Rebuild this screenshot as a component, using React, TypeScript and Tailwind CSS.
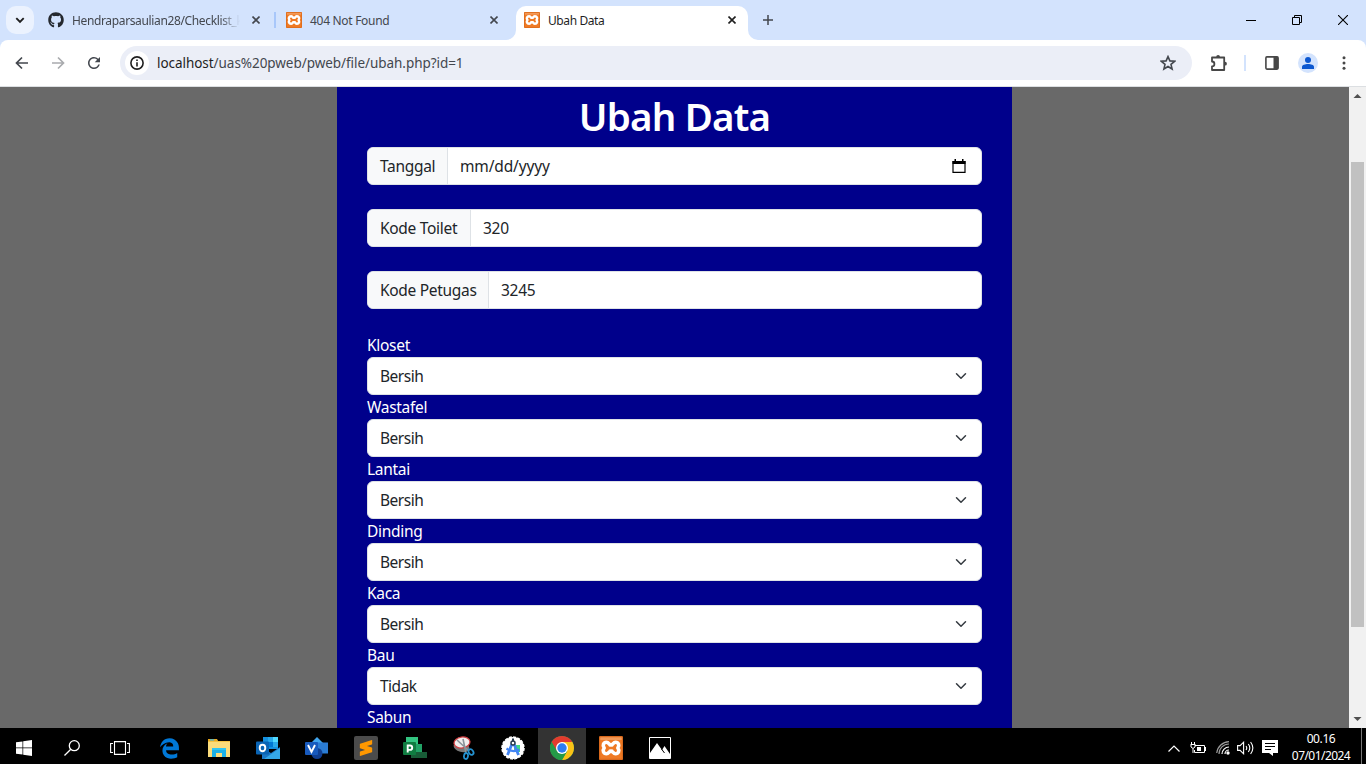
import React from "react";
import { FaEdgeLegacy, FaGithub } from "react-icons/fa";
import { SiSublimetext } from "react-icons/si";
import { MdRefresh } from "react-icons/md";

const CloseGlyph = ({ dark = false }: { dark?: boolean }) => (
  <svg width="8" height="8" viewBox="0 0 8 8" className="shrink-0">
    <path d="M.5.5l7 7M7.5.5l-7 7" stroke={dark ? "#1f1f1f" : "#43474e"} strokeWidth="1.6" />
  </svg>
);

const Xampp = ({ size }: { size: number }) => (
  <svg width={size} height={size} viewBox="0 0 24 24" className="shrink-0">
    <rect width="24" height="24" rx="1.5" fill="#ef7a24" />
    <path d="M1 1h22v3H1z" fill="#f39a58" />
    <rect x=".6" y=".6" width="22.8" height="22.8" rx="1.2" fill="none" stroke="#d9691c" strokeWidth="1.2" />
    <path d="M7.500 6.300c-3 0-4.300 3-2.300 5.700-2 2.700-.7 5.700 2.300 5.700 2.500 0 2.200-2.500 4.500-2.500s2 2.500 4.500 2.500c3 0 4.300-3 2.300-5.700 2-2.700.7-5.700-2.300-5.700-2.500 0-2.200 2.500-4.500 2.500s-2-2.500-4.500-2.500z" fill="none" stroke="#fff" strokeWidth="3.600" strokeLinejoin="round" />
    <path d="M9.800 8.500h4.400v2H9.800zM9.800 13.500h4.400v2H9.800z" fill="#fff" />
  </svg>
);

function TabStrip() {
  return (
    <div className="flex h-10 shrink-0 items-start bg-[#d3e3fd] text-[12px]">
      <div className="ml-1.5 mt-1.5 flex h-7 w-7 items-center justify-center rounded-[10px] bg-[#ebf2fe]">
        <svg width="10" height="7" viewBox="0 0 10 7"><path d="M1.300 1.200L5 4.900l3.700-3.700" fill="none" stroke="#1f1f1f" strokeWidth="1.900" /></svg>
      </div>
      <div className="ml-3.5 flex h-10 w-[226px] items-center">
        <FaGithub size={16} className="shrink-0 text-[#24292f]" />
        <span className="ml-2 w-[168px] whitespace-nowrap pt-px text-[#43474e] tracking-[-0.36px] [mask-image:linear-gradient(to_right,black_88%,transparent)]">Hendraparsaulian28/Checklist_k</span>
        <span className="ml-3"><CloseGlyph /></span>
      </div>
      <div className="mt-3 h-4 w-0.5 bg-[#a8c7fa]" />
      <div className="ml-2.5 flex h-10 w-[230px] items-center">
        <Xampp size={16} />
        <span className="ml-2 w-[180px] pt-px tracking-[-0.3px] text-[#43474e]">404 Not Found</span>
        <CloseGlyph />
      </div>
      <div className="relative mt-1.5 flex h-[34px] w-[232px] items-center rounded-t-[10px] bg-white pb-1.5 pl-2">
        <svg width="10" height="10" className="absolute bottom-0 -left-2.5"><path d="M10 0v10H0A10 10 0 0 0 10 0z" fill="#fff" /></svg>
        <svg width="10" height="10" className="absolute bottom-0 -right-2.5"><path d="M0 0v10h10A10 10 0 0 1 0 0z" fill="#fff" /></svg>
        <Xampp size={16} />
        <span className="ml-2 w-[180px] pt-px tracking-[-0.4px] text-[#1f1f1f]">Ubah Data</span>
        <CloseGlyph dark />
      </div>
      <svg width="10" height="10" viewBox="0 0 10 10" className="ml-[15px] mt-[15px]"><path d="M5 0v10M0 5h10" stroke="#43474e" strokeWidth="1.500" /></svg>
      <div className="ml-auto mr-[18px] flex h-10 items-center gap-9">
        <svg width="10" height="10"><path d="M0 5.500h10" stroke="#000" /></svg>
        <svg width="10" height="10" fill="none" stroke="#000"><path d="M.5 2.500h7v7h-7zM2.500 2.500v-2h7v7h-2" /></svg>
        <svg width="10" height="10"><path d="M0 0l10 10M10 0L0 10" stroke="#000" strokeWidth="1.100" /></svg>
      </div>
    </div>
  );
}

function Toolbar() {
  return (
    <div className="shrink-0 bg-[#d3e3fd]">
      <div className="flex h-[47px] items-center rounded-t-[8px] border-b border-[#dcdfe2] bg-white">
        <svg width="14" height="14" viewBox="0 0 14 14" className="ml-[15px]" fill="none" stroke="#43474e" strokeWidth="1.700"><path d="M13 7H2M7 1.500L1.500 7 7 12.500" /></svg>
        <svg width="14" height="14" viewBox="0 0 14 14" className="ml-[22px]" fill="none" stroke="#a9abae" strokeWidth="1.700"><path d="M1 7h11M7 1.500L12.500 7 7 12.500" /></svg>
        <MdRefresh size={18} className="ml-5 text-[#43474e]" />
        <div className="ml-[17px] flex h-[34px] w-[1072px] items-center rounded-full bg-[#ebeef7] pl-[5px] pr-[16px]">
          <span className="grid h-6 w-6 place-items-center rounded-full bg-white">
            <svg width="14" height="14" viewBox="0 0 14 14"><circle cx="7" cy="7" r="6.100" fill="none" stroke="#1f1f1f" strokeWidth="1.600" /><path d="M6.200 6.200h1.600v4.300H6.200zM6.200 3.500h1.600v1.600H6.200z" fill="#1f1f1f" /></svg>
          </span>
          <span className="ml-2 whitespace-nowrap pt-px text-[13.500px] tracking-[-0.05px] text-[#43474e]"><span className="text-[#1f1f1f]">localhost</span>/uas%20pweb/pweb/file/ubah.php?id=1</span>
          <svg width="16" height="16" viewBox="0 0 16 16" className="ml-auto"><path d="M8 1.600l1.900 4.300 4.700.4-3.600 3.100 1.100 4.600L8 11.500 3.900 14 5 9.400 1.400 6.300l4.700-.4z" fill="none" stroke="#43474e" strokeWidth="1.600" /></svg>
        </div>
        <svg width="18" height="18" viewBox="0 0 18 18" className="ml-[18px]" fill="none" stroke="#474747" strokeWidth="1.800" strokeLinejoin="round">
          <path d="M2 3.500h12.200v12.500H2v-3.700a2.400 2.400 0 0 0 0-4.800z" />
          <path d="M6.200 3a1.900 1.900 0 0 1 3.800 0zM15 7.800a1.900 1.900 0 0 1 0 3.800z" fill="#474747" stroke="none" />
        </svg>
        <div className="ml-[16px] h-4 w-0.5 bg-[#d3e3fd]" />
        <svg width="14" height="14" viewBox="0 0 14 14" className="ml-[19px]"><rect x=".9" y=".9" width="12.200" height="12.200" rx="1" fill="none" stroke="#474747" strokeWidth="1.600" /><path d="M8.500 1h4.500v12H8.500z" fill="#474747" /></svg>
        <span className="ml-[19px] grid h-5 w-5 place-items-center rounded-full bg-[#d3e3fd]">
          <svg width="12" height="12" viewBox="0 0 12 12" fill="#0b57d0"><circle cx="6" cy="3" r="3" /><path d="M0 12V9.800C0 7.900 3.200 7 6 7s6 .9 6 2.800V12z" /></svg>
        </span>
        <svg width="4" height="14" viewBox="0 0 4 14" className="ml-6" fill="#474747"><circle cx="2" cy="1.700" r="1.500" /><circle cx="2" cy="7" r="1.500" /><circle cx="2" cy="12.300" r="1.500" /></svg>
      </div>
    </div>
  );
}

function Field({ label, width, children }: { label: string; width: string; children: React.ReactNode }) {
  return (
    <div className="mb-6 flex h-[38px] overflow-hidden rounded-[6px] border border-[#dee2e6] bg-white text-[#212529]">
      <div className={`${width} flex shrink-0 items-center whitespace-nowrap border-r border-[#dee2e6] bg-[#f8f9fa] pl-3 pt-0.5`}>{label}</div>
      <div className="flex flex-1 items-center pl-3 pr-[15px]">{children}</div>
    </div>
  );
}

const selects = [
  ["Kloset", "Bersih"],
  ["Wastafel", "Bersih"],
  ["Lantai", "Bersih"],
  ["Dinding", "Bersih"],
  ["Kaca", "Bersih"],
  ["Bau", "Tidak"],
];

function Page() {
  return (
    <div className="flex h-[641px] shrink-0 bg-[#696969]">
      <div className="flex flex-1 justify-center overflow-hidden">
        <main className="w-[675px] shrink-0 bg-[#00008b] px-[30px] pt-1 text-[15.500px] tracking-[-0.3px]">
          <h1 className="mb-2 h-12 text-center text-[38.500px] font-semibold leading-[51px] tracking-[-0.8px] text-white">Ubah Data</h1>
          <Field label="Tanggal" width="w-20">
            <span className="pt-0.5 tracking-[-0.15px]">mm/dd/yyyy</span>
            <svg width="14" height="14" viewBox="0 0 14 14" className="ml-auto"><path d="M1 2.500h12v10.800H1z" fill="none" stroke="#000" strokeWidth="1.200" /><path d="M.5 2h13v3H.5zM2.500 0h1.500v2H2.500zM10 0h1.500v2H10z" /></svg>
          </Field>
          <Field label="Kode Toilet" width="w-[103px]"><span className="pt-0.5">320</span></Field>
          <Field label="Kode Petugas" width="w-[121px]"><span className="pt-0.5">3245</span></Field>
          {selects.map(([label, value]) => (
            <div key={label}>
              <div className="h-6 leading-6 text-white">{label}</div>
              <div className="flex h-[38px] items-center justify-between rounded-[6px] border border-[#dee2e6] bg-white pl-3 pr-[14px] text-[#212529]">
                <span className="pt-0.5 tracking-[-0.5px]">{value}</span>
                <svg width="12" height="12" viewBox="0 0 16 16" fill="none" stroke="#343a40" strokeWidth="2" strokeLinecap="round" strokeLinejoin="round"><path d="m2 5 6 6 6-6" /></svg>
              </div>
            </div>
          ))}
          <div className="h-6 leading-6 text-white">Sabun</div>
        </main>
      </div>
      <div className="flex w-[17px] flex-col items-center bg-[#f1f1f1]">
        <svg width="17" height="17"><path d="M4.500 11h8l-4-4z" fill="#505050" /></svg>
        <div className="mt-[58px] h-[465px] w-[13px] bg-[#c1c1c1]" />
        <svg width="17" height="17" className="mt-auto"><path d="M4.500 6h8l-4 4z" fill="#505050" /></svg>
      </div>
    </div>
  );
}

const Explorer = () => (
  <svg width="22" height="20" viewBox="0 0 22 20">
    <path d="M0 1h9l1 2h12v16H0z" fill="#f5c342" /><path d="M0 1h9v2H0z" fill="#e9a820" /><path d="M2 1.300h4v1.200H2z" fill="#39b8e8" />
    <path d="M0 4h22v15H0z" fill="#fbdc7b" /><path d="M4 19v-8h14v8h-4v-4H8v4z" fill="#1bb1e7" /><path d="M4 10h14v2H4z" fill="#2fc5f2" />
  </svg>
);

const Outlook = () => (
  <svg width="24" height="22" viewBox="0 0 24 22">
    <path d="M7 0h15v12H7z" fill="#1490df" /><path d="M12 0h5v5h-5z" fill="#28a8ea" /><path d="M17 0h5v5h-5z" fill="#50d9ff" /><path d="M12 5h5v5h-5z" fill="#0078d4" /><path d="M17 5h5v5h-5z" fill="#28a8ea" />
    <path d="M6 11l9 5 9-6v12H6z" fill="#1a78c7" /><path d="M8 22l16-11v11z" fill="#35a7e7" /><rect y="4.500" width="13" height="13" rx="1" fill="#0a64b4" />
    <ellipse cx="6.500" cy="11" rx="2.800" ry="3.200" fill="none" stroke="#fff" strokeWidth="1.900" />
  </svg>
);

const Visio = () => (
  <svg width="24" height="22" viewBox="0 0 24 22">
    <path d="M12 0l6 6-8 8-6-6z" fill="#41a5ee" /><rect x="12" y="5.500" width="11" height="11" fill="#2b7cd3" /><circle cx="12" cy="16.500" r="5.500" fill="#103f91" />
    <rect y="5" width="13" height="13" rx="1" fill="#185abd" /><path d="M3 8l3.500 7L10 8" fill="none" stroke="#fff" strokeWidth="1.900" />
  </svg>
);

const Project = () => (
  <svg width="24" height="22" viewBox="0 0 24 22">
    <path d="M3 0h12v8H3z" fill="#33c481" /><path d="M8 7h11v8H8z" fill="#21a366" /><path d="M8 15h16v6H8z" fill="#185c37" />
    <rect y="5" width="13" height="13" rx="1" fill="#107c41" /><path d="M4.700 15.500v-7H7a2.200 2.200 0 0 1 0 4.400H5" fill="none" stroke="#fff" strokeWidth="1.900" />
  </svg>
);

const Snip = () => (
  <svg width="22" height="24" viewBox="0 0 22 24">
    <ellipse cx="8.500" cy="11" rx="8" ry="5" fill="#777" transform="rotate(14 8.500 11)" />
    <ellipse cx="9" cy="6.500" rx="8" ry="5.500" fill="#f1eeee" stroke="#d23f43" strokeWidth="1.200" transform="rotate(-8 9 6.500)" />
    <path d="M4 4l12 11M10 3l3 14" stroke="#8a9299" strokeWidth="1.600" />
    <g fill="none" stroke="#2492d1" strokeWidth="1.800"><ellipse cx="18" cy="16" rx="2.200" ry="3" transform="rotate(-35 18 16)" /><ellipse cx="13" cy="20" rx="2" ry="3" transform="rotate(10 13 20)" /></g>
  </svg>
);

const AndroidStudio = () => (
  <svg width="24" height="24" viewBox="0 0 24 24">
    <circle cx="12" cy="12" r="11" fill="#fff" stroke="#fff" strokeWidth="1.500" strokeDasharray="3 1.300" />
    <path d="M13 9h6v7h-6z" fill="#3ddc84" /><path d="M11 8l-4.500 11M13 8l4.500 11" stroke="#4285f4" strokeWidth="2.800" />
    <path d="M5.500 12.500q6.500 4.500 13 1" fill="none" stroke="#4285f4" strokeWidth="2.200" /><circle cx="12" cy="7" r="2" fill="#fff" stroke="#263b50" strokeWidth="1.500" /><path d="M12 2.500v3" stroke="#263b50" strokeWidth="2" />
  </svg>
);

const Chrome = () => (
  <svg width="24" height="24" viewBox="0 0 24 24">
    <circle cx="12" cy="12" r="12" fill="#34a853" />
    <path d="M1.610 6a12 12 0 0 1 20.780 0H12L6.800 15z" fill="#e33b2e" />
    <path d="M22.390 6A12 12 0 0 1 12 24l5.200-9L12 6z" fill="#fbc116" /><path d="M1.610 6A12 12 0 0 0 12 24l5.200-9H6.800z" fill="#249a47" />
    <circle cx="12" cy="12" r="6" fill="#fff" /><circle cx="12" cy="12" r="4.700" fill="#2d7df0" />
  </svg>
);

const Photos = () => (
  <svg width="22" height="22" viewBox="0 0 22 22"><path d="M.5.500h21v21H.5z" fill="#000" stroke="#fff" /><path d="M1 16l7-10 5 7 2.500-4L21 17v4H1z" fill="#fff" /><path d="M12.500 12l3 4" stroke="#000" /></svg>
);

const apps = [
  <FaEdgeLegacy size={21} className="mr-0.5 text-[#0078d7]" />,
  <Explorer />, <Outlook />, <Visio />,
  <span className="grid h-6 w-6 place-items-center rounded-[2px] bg-[#4b4b4b]"><SiSublimetext size={16} className="text-[#ff9800]" /></span>,
  <Project />, <Snip />, <AndroidStudio />, <Chrome />, <Xampp size={24} />, <Photos />,
];

function Taskbar() {
  return (
    <div className="flex h-9 shrink-0 bg-black text-white">
      <div className="grid w-12 place-items-center pt-1"><svg width="16" height="16" viewBox="0 0 16 16" fill="#fff"><path d="M0 2.300l6.500-.9v6.200H0zM7.200 1.300L16 0v7.600H7.200zM0 8.300h6.500v6.200L0 13.700zM7.200 8.300H16V16l-8.800-1.300z" /></svg></div>
      <div className="grid w-12 place-items-center pt-1"><svg width="16" height="16" fill="none" stroke="#fff" strokeWidth="1.300"><circle cx="10.300" cy="5.700" r="5" /><path d="M6.800 9.200L.5 15.500" /></svg></div>
      <div className="grid w-[50px] place-items-center pr-0.5 pt-1"><svg width="20" height="14" fill="none" stroke="#fff" strokeWidth="1.100"><path d="M4.500.600h11v12.800h-11zM3 2.500H.6v9H3M17 2.500h2.400v9H17" /></svg></div>
      {apps.map((icon, i) => (
        <div key={i} className={`mr-px grid w-12 place-items-center pt-1 ${i === 8 ? "bg-[#333333]" : ""}`}>{icon}</div>
      ))}
      <div className="ml-auto flex items-center pt-1">
        <svg width="12" height="7" fill="none" stroke="#fff" strokeWidth="1.200"><path d="M.5 6.500L6 1l5.500 5.500" /></svg>
        <svg width="16" height="12" className="ml-2.5" fill="none" stroke="#fff"><path d="M5 3.500h9.500v7H4.500V8M15.500 5v4M.5 2.500h5M1.500 0v2.500M4.500 0v2.500M1 3v2l2 1.500L5 5V3M3 6.500V11" /><path d="M7 5h4v4H7z" fill="#fff" stroke="none" /></svg>
        <svg width="14" height="14" className="ml-2.5" fill="none" stroke="#fff" strokeWidth="1.200"><path d="M9 13a4 4 0 0 1 4-4M6 13a7 7 0 0 1 7-7" /><path d="M3 13A10 10 0 0 1 13 3M.7 12A13 13 0 0 1 13 .6" stroke="#999" /><circle cx="12" cy="12" r="1.700" fill="#fff" stroke="none" /></svg>
        <svg width="17" height="14" className="ml-[7px]" fill="none" stroke="#fff" strokeWidth="1.100"><path d="M.6 4.600h2.500l3.500-3.400v11.600L3.100 9.400H.6zM9 5q1.500 2 0 4M11.300 3q3 4 0 8M13.600 1q4.500 6 0 12" /></svg>
        <svg width="16" height="16" className="ml-2"><path d="M0 0h16v13h-5v3l-4-3H0z" fill="#fff" /><path d="M3 3.500h10M3 6.500h10M3 9.500h6" stroke="#000" /></svg>
      </div>
      <div className="ml-3 flex w-[62px] flex-col items-center justify-center pt-0.5 text-[12px] leading-[17px]">
        <span className="tracking-[-0.4px]">00.16</span>
        <span className="whitespace-nowrap tracking-[-0.550px]">07/01/2024</span>
      </div>
      <div className="ml-[9px] mr-1 w-px bg-[#777]" />
    </div>
  );
}

export default function App() {
  return (
    <div className="flex h-[764px] w-[1366px] flex-col overflow-hidden font-['Noto_Sans','Open_Sans',sans-serif]">
      <TabStrip />
      <Toolbar />
      <Page />
      <Taskbar />
    </div>
  );
}
